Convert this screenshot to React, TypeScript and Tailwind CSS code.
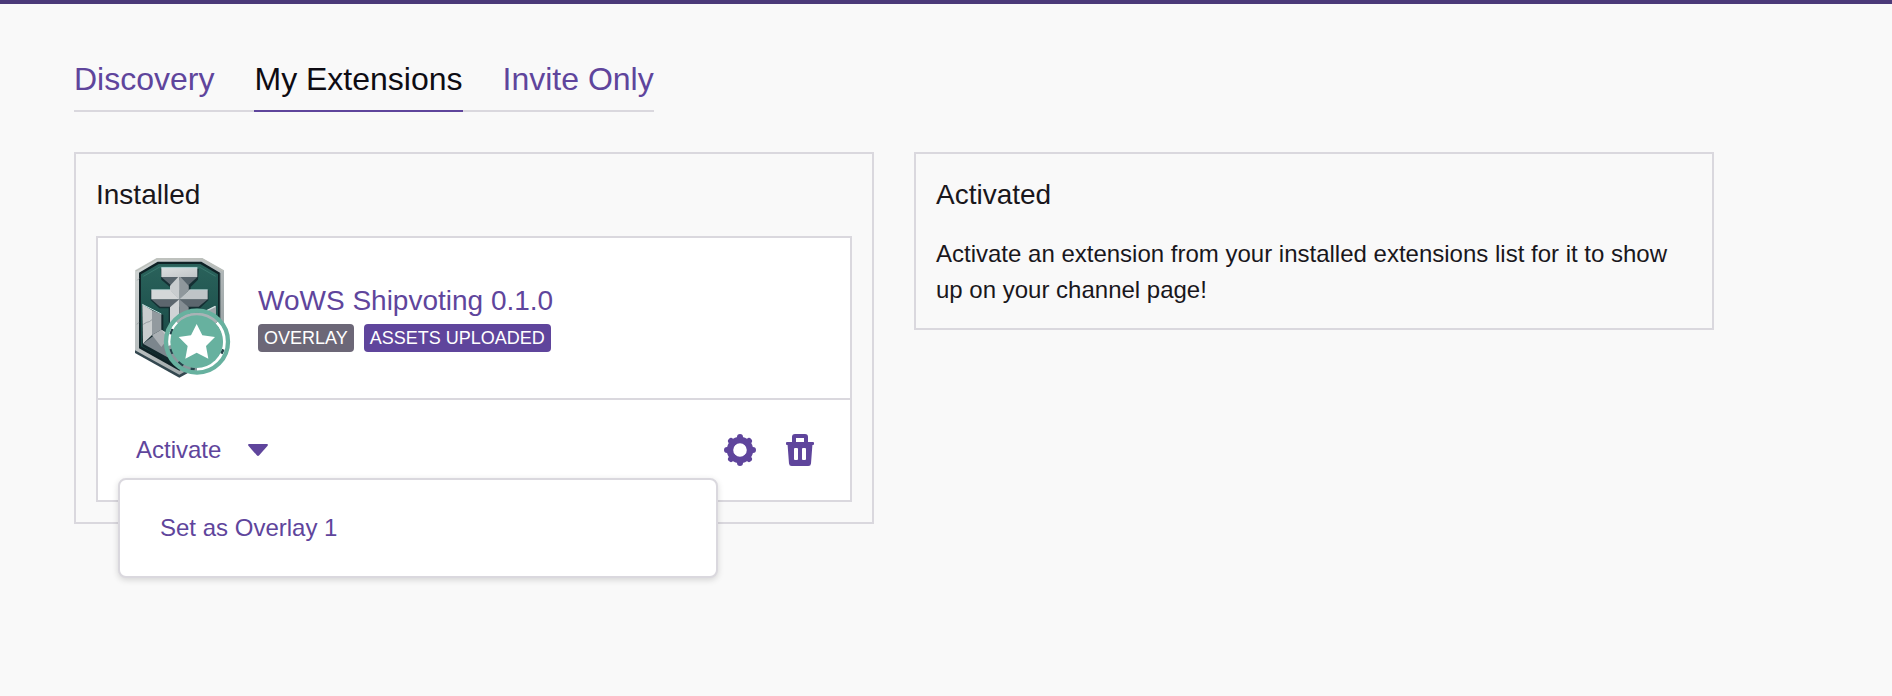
import { useState } from "react";

function ShieldEmblem() {
  return (
    <svg viewBox="42 36 294 366" className="h-[122px] w-[98px] shrink-0" role="img" aria-label="WoWS Shipvoting">
      <defs>
        <linearGradient id="rim" x1="0" y1="0" x2="1" y2="1">
          <stop offset="0" stopColor="#d3d7d6" />
          <stop offset="0.5" stopColor="#b4babb" />
          <stop offset="1" stopColor="#8a9597" />
        </linearGradient>
        <linearGradient id="field" x1="0" y1="0" x2="0" y2="1">
          <stop offset="0" stopColor="#2a625b" />
          <stop offset="0.5" stopColor="#1f534e" />
          <stop offset="1" stopColor="#16403e" />
        </linearGradient>
        <linearGradient id="steel" x1="0" y1="0" x2="1" y2="1">
          <stop offset="0" stopColor="#dcdfe0" />
          <stop offset="1" stopColor="#c0c5c8" />
        </linearGradient>
      </defs>
      <path d="M45 300 L45 324 L178 398 L312 324 L312 300 Z" fill="#33474f" />
      <path d="M45 76 L110 39 H247 L312 76 V316 L178 389 L45 316 Z" fill="url(#rim)" />
      <path d="M48 78 L111 42 H246 L309 78" fill="none" stroke="#bcbfb9" strokeWidth="4" />
      <path d="M57 83 L113 50 H244 L300 83 V310 L178 377 L57 310 Z" fill="#0f2226" />
      <path d="M63 88 L116 57 H241 L294 88 V304 L178 368 L63 304 Z" fill="url(#field)" />
      <path d="M70 94 L119 66 H238 L287 94" fill="none" stroke="#3a776e" strokeWidth="3" />
      <path d="M122 72 L124 104 L150 126 V136 H92 V166 L118 190 H146 V230 H212 V190 H240 L265 166 V136 H212 V126 L234 104 L236 72 Z" fill="#152f33" />
      <path d="M124 96 H232 L206 120 V136 H152 V120 Z" fill="#56636b" />
      <path d="M150 122 L178 92 V164 L150 136 Z" fill="#c9cdcf" />
      <path d="M178 92 L206 122 V136 L178 164 Z" fill="#8f979c" />
      <path d="M124 68 H232 V96 H124 Z" fill="url(#steel)" />
      <path d="M124 68 H232" stroke="#b6dcdd" strokeWidth="3" />
      <path d="M94 163 H263 L236 185 H120 Z" fill="#5c666e" />
      <path d="M94 134 H150 L178 163 H94 Z" fill="#d4d7d8" />
      <path d="M263 134 H208 L178 163 H263 Z" fill="#bfc4c7" />
      <path d="M150 134 L178 163 V106 Z" fill="#c9cdcf" />
      <path d="M178 163 L150 187 V240 H178 Z" fill="#d0d3d5" />
      <path d="M178 163 L206 187 V240 H178 Z" fill="#858d93" />
      <path d="M94 134 H150 M208 134 H263" stroke="#b9dbdb" strokeWidth="2" />
      <path d="M67 182 L130 210 V262 L178 300 V372 L67 304 Z" fill="#11272b" />
      <path d="M67 178 L96 196 V270 L69 296 Z" fill="#c9cdce" />
      <path d="M96 196 L124 208 V254 L96 270 Z" fill="#929a9f" />
      <path d="M69 296 L124 254 L178 292 V356 Z" fill="#7c868d" />
      <path d="M96 270 L124 254 L150 274 L124 306 Z" fill="#aab0b4" />
      <path d="M124 254 L178 286 V322 Z" fill="#c7cbcd" />
      <path d="M67 178 L124 207" stroke="#b5d6d5" strokeWidth="3" />
      <path d="M70 238 L80 232 L88 230 L96 224 M58 100 L52 106 M51 238 L57 232" fill="none" stroke="#7e878b" strokeWidth="2" />
      <path d="M288 182 L228 212 V290 H288 Z" fill="#9da5a9" />
      <path d="M286 184 L252 201" stroke="#d4e1e1" strokeWidth="4" />
      <path d="M299 84 V310" stroke="#24383c" strokeWidth="4" />
      <path d="M290 232 A82 82 0 0 1 231 372 M150 302 A82 82 0 0 1 172 233" fill="none" stroke="#ffffff" strokeWidth="12" />
      <path d="M172 233 A82 82 0 0 1 290 232" fill="none" stroke="#a9b3b6" strokeWidth="12" />
      <path d="M231 372 A82 82 0 0 1 150 302" fill="none" stroke="#8b979c" strokeWidth="12" />
      <path d="M152 268 A82 82 0 0 1 158 252 M152 312 L158 326 M176 350 L190 361 M212 371 L224 373 M304 326 L310 313" fill="none" stroke="#24434a" strokeWidth="8" />
      <circle cx="231" cy="290" r="93" fill="none" stroke="#67b19f" strokeWidth="13" />
      <circle cx="230" cy="290" r="79" fill="#67b19f" />
      <path d="M230 237 L247 271 L285 276 L258 303 L265 341 L230 323 L196 341 L203 303 L176 276 L213 271 Z" fill="#ffffff" />
    </svg>
  );
}

function GearIcon() {
  return (
    <svg viewBox="0 0 32 32" className="size-8" aria-hidden="true">
      <path
        d="M16 3V6M16 26V29M3 16H6M26 16H29M7 7L9 9M23 23L25 25M25 7L23 9M9 23L7 25"
        fill="none"
        stroke="currentColor"
        strokeLinecap="round"
        strokeWidth="6"
      />
      <circle cx="16" cy="16" r="10" fill="none" stroke="currentColor" strokeWidth="6.400" />
    </svg>
  );
}

function TrashIcon() {
  return (
    <svg viewBox="0 0 32 32" className="size-8" aria-hidden="true">
      <path
        fill="currentColor"
        fillRule="evenodd"
        d="M11 0h10q3 0 3 3v5h5q1 0 1 1v1q0 1-1 1h-.6L27 29.500q-.2 2.500-2.700 2.500H7.700Q5.200 32 5 29.500L3.600 11H3q-1 0-1-1V9q0-1 1-1h5V3q0-3 3-3ZM12 4v4h8V4ZM11 14q-1 0-1 1v10q0 1 1 1h2q1 0 1-1V15q0-1-1-1ZM19 14q-1 0-1 1v10q0 1 1 1h2q1 0 1-1V15q0-1-1-1Z"
      />
    </svg>
  );
}

const tabs = ["Discovery", "My Extensions", "Invite Only"];

export default function App() {
  const [activeTab, setActiveTab] = useState("My Extensions");
  const [menuOpen, setMenuOpen] = useState(true);

  return (
    <div className="min-h-screen border-t-4 border-[#4b3a79] bg-[#f9f9f9] font-['Liberation_Sans',Arial,sans-serif] text-2xl leading-9 text-[#19171c]">
      <main className="max-w-[1714px] pt-12 pb-12 pl-[74px]">
        <nav className="flex w-fit gap-10 text-[32px] leading-[54px] whitespace-nowrap shadow-[inset_0_-2px_0_#dad8de]">
          {tabs.map((tab) => (
            <a
              key={tab}
              href="#"
              onClick={() => setActiveTab(tab)}
              aria-current={tab === activeTab ? "page" : undefined}
              className={
                tab === activeTab
                  ? "border-b-2 border-[#5f459c] pb-1 text-[#0e0c13]"
                  : "border-b-2 border-transparent pb-1 text-[#5f459c]"
              }
            >
              {tab}
            </a>
          ))}
        </nav>

        <div className="mt-10 grid grid-cols-2 items-start gap-10">
          <section className="border-2 border-[#dad8de] p-5">
            <h2 className="text-[28px] leading-[42px]">Installed</h2>
            <article className="mt-5 border-2 border-[#dad8de] bg-white">
              <div className="flex h-40 items-center gap-[26px] px-9">
                <ShieldEmblem />
                <div className="pb-1">
                  <h3 className="mb-0.5 text-[28px] leading-[42px]">
                    <a href="#" className="text-[#5f459c]">WoWS Shipvoting 0.1.0</a>
                  </h3>
                  <div className="flex gap-2.5 text-lg leading-7 text-white">
                    <span className="rounded bg-[#6c6777] px-1.5">OVERLAY</span>
                    <span className="rounded bg-[#5f459c] px-1.5">ASSETS UPLOADED</span>
                  </div>
                </div>
              </div>
              <div className="flex h-[102px] items-center justify-between border-t-2 border-[#dad8de] pr-[34px] pl-5 text-[#5f459c]">
                <div className="relative">
                  <button
                    type="button"
                    aria-expanded={menuOpen}
                    onClick={() => setMenuOpen(!menuOpen)}
                    className="flex h-14 items-center gap-[27px] px-[18px]"
                  >
                    Activate
                    <svg viewBox="0 0 20 12" className="h-3 w-5" aria-hidden="true">
                      <path fill="currentColor" d="M1 0H19Q20.400.4 19.600 1.700L11.200 11.300Q10 12.500 8.800 11.300L.4 1.700Q-.4.4 1 0Z" />
                    </svg>
                  </button>
                  {menuOpen && (
                    <div className="absolute top-full left-0 z-10 w-[600px] rounded-lg border-2 border-[#dad8de] bg-white px-10 py-[30px] shadow-[0_2px_6px_rgba(0,0,0,0.15)]">
                      <button type="button" className="block w-full text-left">Set as Overlay 1</button>
                    </div>
                  )}
                </div>
                <div className="flex gap-7">
                  <button type="button" aria-label="Settings"><GearIcon /></button>
                  <button type="button" aria-label="Uninstall"><TrashIcon /></button>
                </div>
              </div>
            </article>
          </section>

          <section className="border-2 border-[#dad8de] p-5">
            <h2 className="text-[28px] leading-[42px]">Activated</h2>
            <p className="mt-5">
              Activate an extension from your installed extensions list for it to show up on your channel page!
            </p>
          </section>
        </div>
      </main>
    </div>
  );
}
